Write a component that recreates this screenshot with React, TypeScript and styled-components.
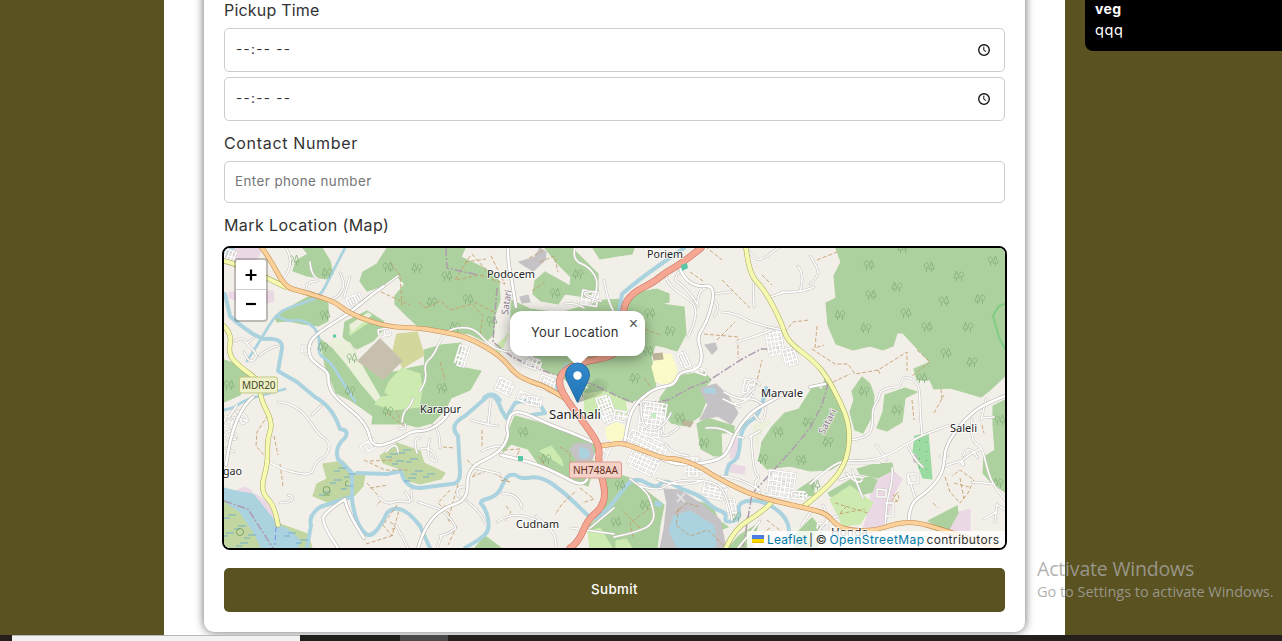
import React from 'react';
import styled, { createGlobalStyle } from 'styled-components';

const GlobalStyle = createGlobalStyle`
  * { box-sizing: border-box; }
  body {
    margin: 0;
    overflow: hidden;
    font-family: Inter, "Open Sans", sans-serif;
    color: #333;
  }
`;

const Screen = styled.div`
  position: relative;
  display: flex;
  flex-direction: column;
  width: 1282px;
  height: 641px;
  overflow: hidden;
  background: #5a5221;
`;

const Main = styled.main`
  display: flex;
  flex: 1;
  min-height: 0;
  overflow: hidden;
  padding-left: 164px;
`;

const Panel = styled.section`
  width: 901px;
  padding: 0 40px;
  background: #fff;
  overflow: hidden;
`;

const Card = styled.form`
  display: flex;
  flex-direction: column;
  height: 662px;
  margin-top: -30px;
  padding: 30px 20px 20px;
  border-radius: 10px;
  background: #fff;
  box-shadow: 0 0 10px rgba(0, 0, 0, 0.6);
`;

const Label = styled.label<{ $top: number; $bottom: number; $track: number }>`
  height: 22px;
  margin: ${(p) => p.$top}px 0 ${(p) => p.$bottom}px;
  font-size: 16px;
  line-height: 21px;
  letter-spacing: ${(p) => p.$track}px;
`;

const Field = styled.div<{ $height: number; $gap?: number }>`
  display: flex;
  flex-shrink: 0;
  align-items: center;
  justify-content: space-between;
  height: ${(p) => p.$height}px;
  margin-top: ${(p) => p.$gap ?? 0}px;
  padding: 0 14px 0 10px;
  border: 1px solid #ccc;
  border-radius: 5px;
`;

const TimeValue = styled.span`
  padding: 0 0 2px 1px;
  font-size: 13.4px;
  letter-spacing: 1.35px;
  white-space: pre;
`;

const Placeholder = styled.span`
  padding-bottom: 2px;
  font-size: 13.3px;
  letter-spacing: 0.47px;
  color: #757575;
`;

const MapFrame = styled.div`
  position: relative;
  flex-shrink: 0;
  height: 304px;
  margin: 0 -2px;
  border: 2px solid #000;
  border-radius: 8px;
  overflow: hidden;
  background: #f2efe9;
`;

const MapDrawing = styled.svg`
  display: block;
  width: 781px;
  height: 300px;
`;

const ZoomControl = styled.div`
  position: absolute;
  top: 10px;
  left: 10px;
  width: 34px;
  border: 2px solid rgba(0, 0, 0, 0.22);
  border-radius: 4px;
  background: #fff;
  background-clip: padding-box;
`;

const ZoomButton = styled.div`
  display: flex;
  align-items: center;
  justify-content: center;
  height: 29px;
  & + & { height: 31px; padding-bottom: 2px; border-top: 1px solid #ccc; }
`;

const Popup = styled.div`
  position: absolute;
  top: 63px;
  left: 286px;
  display: flex;
  align-items: center;
  width: 135px;
  height: 45px;
  padding: 0 0 3px 21px;
  border-radius: 12px;
  background: #fff;
  box-shadow: 0 3px 14px rgba(0, 0, 0, 0.4);
  font-size: 13px;
  letter-spacing: 0.23px;
  white-space: nowrap;
`;

const CloseMark = styled.span`
  position: absolute;
  top: 4px;
  right: 7px;
  font: 16px/18px "Liberation Sans", sans-serif;
  letter-spacing: 0;
  color: #555;
`;

const MarkerLayer = styled.svg`
  position: absolute;
  left: 335px;
  top: 107px;
`;

const Attribution = styled.div`
  position: absolute;
  right: 0;
  bottom: 0;
  display: flex;
  align-items: center;
  width: 258px;
  height: 17px;
  padding: 0 0 1px 5px;
  background: rgba(255, 255, 255, 0.8);
  font-size: 12px;
  white-space: pre;
`;

const Credit = styled.span<{ $track: number; $link?: boolean; $before?: number }>`
  margin-left: ${(p) => p.$before ?? 0}px;
  letter-spacing: ${(p) => p.$track}px;
  color: ${(p) => (p.$link ? '#0078a8' : '#333')};
`;

const Submit = styled.button`
  flex-shrink: 0;
  height: 44px;
  margin-top: 18px;
  padding: 0 0 2px;
  border: 0;
  border-radius: 5px;
  background: #5a5221;
  color: #fff;
  font: 500 13.3px Inter, sans-serif;
  letter-spacing: 0.4px;
`;

const Notice = styled.aside`
  width: 197px;
  height: 51px;
  margin-left: 20px;
  padding: 0 10px;
  border-radius: 0 0 0 8px;
  background: #000;
  color: #fff;
  font-size: 14.5px;
  line-height: 21px;
  letter-spacing: 0.6px;
`;

const NoticeTitle = styled.div`
  height: 19px;
  line-height: 18px;
  font-weight: 700;
  font-size: 14px;
  letter-spacing: 0.4px;
`;

const Watermark = styled.div`
  position: absolute;
  left: 1037px;
  top: 556px;
  color: rgba(165, 163, 158, 0.85);
  font-family: "Open Sans", sans-serif;
  white-space: nowrap;
`;

const WatermarkTitle = styled.div`
  font-size: 19.5px;
  line-height: 26px;
  letter-spacing: -0.18px;
`;

const WatermarkText = styled.div`
  font-size: 14.5px;
  line-height: 20px;
  letter-spacing: -0.03px;
`;

const Taskbar = styled.footer`
  display: flex;
  height: 6px;
  background: #26201d;
`;

const TaskSegment = styled.div<{ $width: number; $color: string; $edge?: string }>`
  width: ${(p) => p.$width}px;
  background: ${(p) => p.$color};
  border-top: 1px solid ${(p) => p.$edge ?? p.$color};
`;

const woods = [
  '296,261 308,254 303,248 322,248 330,261 333,274 327,279 307,276 293,271',
  '387,248 377,264 363,272 360,281 367,291 383,286 398,277 405,284 395,296 395,304 407,316 420,328 445,331 470,334 486,342 494,333 494,318 500,300 499,281 486,269 461,257 465,248',
  '545,248 572,248 598,274 598,291 585,297 565,294 558,304 541,301 533,294 535,281 545,272 570,286 571,277 558,264',
  '593,248 600,259 618,256 632,254 634,248',
  '511,300 530,309 560,313 604,300 622,299 622,320 511,330',
  '308,297 323,296 328,304 328,321 318,326 303,324 288,321 277,322 275,316 292,306',
  '345,322 367,311 383,321 385,327 373,341 357,349 343,337',
  '320,339 330,347 353,347 358,361 375,370 395,372 410,368 425,365 424,350 441,345 461,343 460,367 481,371 470,390 451,398 445,410 432,423 418,427 405,424 372,424 373,416 362,408 350,400 336,393 325,365',
  '224,360 240,365 252,378 240,395 224,402',
  '629,304 639,292 657,289 669,294 669,302 661,304 684,307 686,334 677,351 664,347 655,345 651,358 657,377 655,388 646,397 630,402 610,396 584,392 560,376 547,372 530,357 520,340 620,330',
  '676,376 704,372 711,380 700,392 708,396 700,416 685,426 671,423 662,410 660,398',
  '697,424 707,418 734,426 734,433 721,433 722,456 714,456 701,449',
  '836,248 841,262 834,276 836,298 826,303 828,325 836,344 853,350 870,346 883,350 893,346 897,333 903,333 915,346 930,362 914,369 917,380 930,380 934,389 950,388 981,397 990,390 1005,376 1005,248',
  '862,377 852,391 854,400 850,412 855,430 863,433 872,416 874,396 870,384',
  '885,395 905,388 917,392 905,398 902,422 887,431 877,428 883,412',
  '762,442 771,428 785,413 799,409 814,385 822,390 826,375 836,396 848,426 847,459 830,470 810,471 790,466 767,469 759,460',
  '828,493 850,480 870,477 877,480 872,492 850,498 840,500 830,496',
  '857,469 874,464 892,463 893,470 878,478 860,474',
  '928,521 957,506 958,513 948,531',
  '993,406 1005,400 1005,492 992,483 983,473 984,457 995,450 993,425',
  '603,470 630,478 645,490 664,505 660,525 657,548 590,548 589,526 604,512',
  '515,416 551,426 578,436 598,446 595,463 588,486 565,478 538,463 528,449 511,444 503,452 505,439',
  '475,548 485,536 501,548',
  '690,500 712,505 718,520 728,527 720,530 700,510',
  '795,492 814,479 814,495 802,497',
  '728,548 740,535 758,524 752,548',
  '795,535 812,518 822,530 818,548 795,548',
];

const meadows = [
  '389,382 402,368 420,374 422,390 394,398 385,392',
  '382,397 422,390 419,407 393,410 375,404',
  '540,451 551,446 561,459 563,466',
  '830,499 850,486 873,503 860,524 843,526',
  '584,394 607,391 625,402 628,415 604,410 585,417',
  '588,532 600,528 612,548 590,548',
  '616,541 626,539 632,548 616,548',
  '350,325 365,318 372,320 350,335',
  '495,347 505,338 508,334 503,347 498,356',
];

const wetlands = [
  '323,464 343,461 353,473 365,474 363,486 352,498 330,503 313,496 317,484 327,479',
  '380,456 397,443 420,451 424,463 445,473 441,479 420,484 405,480 400,469 383,463',
  '224,501 240,512 256,536 260,548 224,548',
  '280,524 308,534 312,548 297,548',
];

const residential = [
  '255,494 273,506 280,523 272,519 254,500',
  '235,491 245,487 252,491 250,496 237,494',
  '872,483 893,471 902,479 893,496 885,528 863,530 870,505',
  '953,514 970,509 970,531 947,531',
  '733,439 739,439 739,459 730,458',
  '727,463 745,467 744,474 730,472',
  '226,248 262,248 257,259 240,262',
  '229,292 273,291 274,301 260,305 229,298',
];

const rivers = [
  'M225 294L230 316Q238 324 253 334L263 339Q283 337 282 348L278 371L297 382L315 397Q333 407 340 429Q350 430 345 438Q334 447 338 459L352 473V499Q355 525 366 534Q374 540 387 513Q400 500 420 526L430 548',
  'M357 473L387 474L401 471Q405 488 420 488L451 484Q461 484 460 470L458 436Q448 425 465 416L488 396Q495 392 501 409L506 418L515 403Q530 398 541 406L545 413L532 415',
  'M350 497L320 507Q308 516 311 525L307 548',
  'M465 548L481 539L490 529L486 509L478 501L498 496L506 476L515 474L521 479L541 476L565 493L585 513L591 518',
  'M596 518L605 513L618 496L634 476L657 489L664 479L681 489L701 496L714 509L727 513L724 523L741 519L737 503L757 499L781 511L791 529L788 539',
  'M766 388L761 415L741 426L739 459L727 464L726 476',
  'M684 248L661 264Q638 280 622 294L619 311',
  'M484 398Q492 390 500 400',
];

const streams = [
  'M345 248L330 277L320 297L300 304L277 312L260 341L247 361',
  'M277 316L287 322L300 319L315 327L320 340L318 355L330 361L340 378L349 392L355 401',
  'M224 410L235 408L242 401L270 393L285 389',
  'M558 394L553 379L567 364',
];

const majorLanes = [
  'M384 286L372 294L350 313L325 328L309 341L309 357L318 365L329 373L328 383L334 397L367 423L372 449L400 439L412 431L428 431L445 420L452 408',
  'M226 465L230 436L244 404L253 397',
  'M418 548L424 528L442 508L468 500L467 468L498 454L509 437L506 425L514 408L550 425L575 434L597 444',
  'M508 248L508 262L512 281L516 307',
  'M679 265L683 278L698 287L711 285L714 296L708 318L703 328L697 338L703 356L698 370L679 372L675 385L655 388L642 398L636 404L629 416L625 440',
  'M662 459L676 466L712 462L727 455L736 431L752 411L775 399L785 393',
  'M1005 396L984 404L966 418L945 445L944 471L930 490L909 504L909 520',
  'M810 387L825 384',
  'M345 499L328 510L320 522L338 548M345 500L348 514L364 538',
  'M501 455L531 462L555 472L585 488L588 477',
];

const lanes = [
  'M340 273L350 291L331 300M350 277L344 297M310 262L311 274L321 281L307 282L306 291L314 294M286 248L292 258L287 276L280 282M384 286L398 276',
  'M235 341L242 337L247 344L259 356L249 364L244 352M259 356L270 347L278 346M247 343L254 338',
  'M278 402L286 402L304 412L318 434L331 443L326 457L316 461L312 475L295 473L279 468L268 461M312 415L321 406M280 503L292 502L293 496L288 495',
  'M224 436L231 425L237 437M228 418L237 405M226 448L234 452M232 417L248 421M236 412L248 415L246 423L240 424L238 410M227 440L236 439',
  'M402 422L403 412L410 407L413 399M399 428L408 431L405 424M420 438L412 438L417 453M379 497L385 505L400 500L414 504L405 492M386 452L397 439L398 452M411 490L412 501M396 525L408 548',
  'M420 391L427 381L424 364L434 355L440 340L450 329L466 327L477 331L490 346L508 353L525 350L535 360',
  'M421 449L430 446L439 464L425 455L430 439M433 425L440 430L440 448',
  'M471 420L487 425L498 426M488 425L491 399M475 468L500 474M482 451L490 446L505 446M502 494L518 492L522 508M497 522L509 514L532 517L557 532L556 548M536 516L545 527L556 524M571 528L614 534M590 528L614 508',
  'M441 510L418 502M468 502L480 511L486 524M442 510L458 526L452 532L440 536M442 535L437 548M466 487L457 486L457 498L466 500',
  'M575 248L572 260L590 267L600 285L592 303M597 292L583 291L587 298L601 301M604 280L608 303L614 312M565 304L575 302L584 308',
  'M668 272L665 278L672 288L685 296L697 307L694 325L688 337M680 271L672 279L686 287L698 305M707 287L696 291L698 306M716 294L725 292L731 292M713 301L722 305L714 316M722 312L735 313L756 325L783 330M737 342L760 335L772 330',
  'M746 248L755 260L763 259L771 253L780 247M781 292L802 293L814 287M798 266L805 276L800 291M770 297L785 292M753 274L754 307',
  'M641 398L640 429L662 431L671 413M661 430L661 443L679 427',
  'M640 486L658 492L674 480L710 480L727 492L732 520M630 479L646 490L652 504L655 520L643 531L614 537M665 444L672 454L688 456M657 479L680 489L704 480',
  'M706 428L720 427L736 437L744 438M752 411L757 420L764 423L766 407M751 435L753 472L761 478L752 483L763 499M749 437L760 431M721 476L739 477L760 490',
  'M724 392L738 400L754 398L762 404M735 403L744 405L752 394M745 390L751 373L760 385M742 400L755 387M723 399L740 407',
  'M810 256L820 270L815 280L810 284M810 484L826 470L843 460L861 461L883 458L907 444L922 435L950 425M887 460L876 445M907 444L914 460L923 467M850 440L868 438L873 425L872 409L879 399L880 391L891 387L900 387L903 376L915 380L920 390L920 413L922 435',
  'M892 468L893 480L886 503L885 529M908 475L916 501M840 480L854 474L863 478M846 473L858 486L862 480M840 463L880 463',
  'M877 489L886 490V497H877ZM886 503H893V516H886M908 474H918V483H908Z',
  'M972 419L970 440L982 447L986 464L992 484L1005 500M972 482L994 484M945 466L963 459L964 467L959 460L980 449M963 456L968 442L978 458M940 456L948 456M997 504L995 522M996 512L984 519M998 505L1005 510M982 418L994 417M981 420L986 399',
  'M825 548L830 515L823 505M815 538L824 519L838 516M765 536L778 548M801 526L812 510M852 470L858 487L863 498M738 548L748 536L760 521',
];

const primary = [
  'M262 248L270 259L285 287L300 291L317 296L335 302L350 314L387 327L420 328L443 332L468 337L501 356L515 374L531 382L545 386L564 398',
  'M600 446L614 444L624 443L664 459L676 458L699 466L714 476L747 493L774 501L810 509L827 514L837 526L853 531L877 530L897 523L917 522L943 530L975 540L998 548',
];
const secondary = [
  'M224 326L232 334L228 354L240 367L260 381L260 398L273 423L267 440L268 463L260 491L275 506L278 525',
  'M224 261L240 264L285 287',
  'M746 248L749 274L764 289L781 321L787 341L814 361L827 377L840 401L850 426L848 459L830 486L803 507',
  'M771 503L761 513L734 529L726 548',
];
const trunk = [
  'M701 248L681 264L666 272L654 282L634 292L624 304L623 325L623 345L611 357L585 361L563 370L558 384L568 402L585 424L600 446L598 463L606 493L601 509L588 519L578 543L570 548',
];

const tracks = [
  'M268 415L257 432L256 446L266 457M274 436L278 455M280 464L283 486M425 308L441 301L450 310L472 304L483 316L480 335M426 308L418 302',
  'M391 263L400 275L402 306M381 292L410 305M440 362L445 380M387 413L404 426L396 410',
  'M470 256L455 280L480 275L505 284L490 254M472 254L492 277M465 262L486 259M474 302L494 312M540 262L554 256L558 272M529 258L544 250M545 282L532 291',
  'M367 483L382 500L376 505M370 488L388 485M397 505L383 525L392 536L399 510M366 544L394 535M364 460L385 470L408 470M370 461L394 460M390 522L398 527L390 530',
  'M443 447L455 448M482 430L482 447M467 460L478 470L472 477L488 470L510 482L500 480M450 490L438 503L449 513M458 484L448 520L457 526L448 545M432 520L445 505M506 506L511 512L505 521M575 492L562 504L555 515M580 488L594 499L582 503M515 460L520 449L505 450',
  'M560 447L570 453V483M548 469L538 456',
  'M696 255L706 247L722 260M690 272L703 281M722 280L750 308M704 334L738 337L738 358M717 340L735 322M660 335L645 329L635 332M644 378L652 389M762 275L772 285',
  'M756 385L762 360M785 332L793 322L809 320M817 326L815 348L824 345M812 349L835 364L848 364L855 374L878 370L907 352V371M833 382L850 374M878 370L880 374M917 350L930 362L912 376M941 389L942 399M817 260L837 252',
  'M912 400L914 420M934 413L944 395M897 493L890 504L899 500L898 492M893 494L897 502M945 477L950 492L960 503L968 493L974 480L960 470L952 476M954 483L969 487M960 478L964 499M933 503L938 508M982 425L984 433',
  'M650 508L630 523L633 537M640 528L622 510M679 508L676 525L690 536L708 530L726 548M675 513L687 503L700 507M767 520L782 532M770 528L756 538M847 506L839 514L865 509M835 503L868 513M748 516L740 531',
];

const boundaries = [
  'M446 248L447 268L478 275M497 288L494 325L493 342L511 356L530 366L550 373L592 384L617 396L640 405L668 400L690 388L708 381L742 359L761 349H785L806 354L824 370L829 380L822 405L810 428L792 450L769 475L752 494L743 548',
  'M224 501L248 509L273 548',
];

type Village = [number, number, number, number, number, number, number];
// x, y, width, height, angle, columns, rows
const villages: Village[] = [
  [642, 401, 25, 34, 8, 7, 9], [632, 429, 40, 15, 25, 9, 4], [634, 448, 29, 18, 25, 8, 5],
  [685, 458, 16, 18, 0, 5, 5], [705, 482, 23, 14, 12, 5, 5], [770, 470, 26, 25, 8, 7, 6],
  [792, 491, 15, 7, 5, 5, 3], [765, 330, 15, 26, -10, 5, 7], [782, 350, 12, 17, -15, 4, 5],
  [542, 375, 15, 13, 20, 5, 4], [500, 377, 16, 13, 25, 5, 4], [525, 355, 18, 10, 20, 5, 3],
  [520, 391, 22, 9, 20, 5, 3], [596, 399, 13, 27, -20, 5, 8], [615, 410, 14, 10, 10, 4, 3],
  [346, 299, 14, 9, -25, 6, 1], [460, 345, 10, 20, 17, 4, 5], [583, 290, 16, 14, 10, 4, 4],
  [227, 249, 10, 12, 20, 4, 3], [378, 330, 12, 7, -10, 3, 2], [302, 346, 7, 8, 0, 2, 2],
  [745, 379, 10, 18, 10, 3, 5], [677, 355, 8, 15, -25, 4, 2], [360, 446, 15, 9, -30, 4, 2],
  [694, 366, 14, 5, 20, 4, 2], [528, 396, 14, 8, 10, 4, 3], [726, 500, 8, 14, -10, 3, 4],
  [601, 443, 11, 18, 25, 3, 4], [818, 523, 8, 7, 10, 2, 2], [226, 416, 8, 9, 20, 2, 3],
];

const treeSpots = [
  [869, 265], [903, 248], [929, 267], [959, 276], [993, 261], [897, 287], [871, 295], [840, 315], [906, 313],
  [866, 328], [944, 301], [980, 299], [927, 327], [968, 327], [946, 353], [972, 362], [922, 378], [864, 391],
  [294, 260], [327, 273], [325, 315], [323, 347], [352, 358], [350, 391], [388, 267], [417, 268], [447, 276], [432, 302],
  [468, 299], [455, 327], [492, 321], [578, 274], [555, 293], [580, 392], [650, 313], [670, 331], [648, 351], [635, 378],
  [442, 388], [388, 411], [523, 432], [546, 459], [680, 418], [704, 443], [778, 432], [763, 459], [801, 460], [828, 442],
  [815, 485], [897, 410], [1000, 420], [998, 483], [620, 485], [645, 505], [616, 522], [736, 517], [229, 385], [808, 422],
];

const waterDashes = [
  [338, 468], [348, 474], [323, 492], [345, 486], [334, 480], [390, 454], [403, 450], [410, 459], [396, 461],
  [415, 471], [427, 474], [408, 478], [228, 515], [238, 526], [226, 533], [248, 535], [240, 543], [288, 533], [300, 540],
];

const places = [
  { name: 'Podocem', x: 487, y: 278, w: 48, size: 11.5 },
  { name: 'Poriem', x: 647, y: 258, w: 36, size: 11.5 },
  { name: 'Marvale', x: 761, y: 397, w: 42, size: 11.5 },
  { name: 'Saleli', x: 950, y: 432, w: 27, size: 11.5 },
  { name: 'Karapur', x: 420, y: 413, w: 41, size: 11.5 },
  { name: 'Sankhali', x: 549, y: 419, w: 52, size: 13 },
  { name: 'Cudnam', x: 516, y: 528, w: 43, size: 11.5 },
  { name: 'Honda', x: 831, y: 536, w: 37, size: 11.5 },
  { name: 'gao', x: 223, y: 475, w: 19, size: 11.5 },
];

const Polys = ({ items, fill }: { items: string[]; fill: string }) => (
  <g fill={fill} stroke={fill} strokeWidth="1.2" strokeLinejoin="round">
    {items.map((points) => <polygon key={points} points={points} />)}
  </g>
);

const Lines = ({ items, color, width, dash }: { items: string[]; color: string; width: number; dash?: string }) => (
  <g fill="none" stroke={color} strokeWidth={width} strokeDasharray={dash} strokeLinejoin="round" strokeLinecap={dash ? 'butt' : 'round'}>
    {items.map((d) => <path key={d} d={d} />)}
  </g>
);

// Rounds the bends of a polyline by curving between segment midpoints.
const smooth = (d: string) => {
  if (/[QHVZ]/.test(d)) return d;
  return d
    .split('M')
    .filter(Boolean)
    .map((part) => {
      const pts = part.split('L').map((p) => p.trim().split(' ').map(Number));
      if (pts.length < 3) return `M${part}`;
      let out = `M${pts[0].join(' ')}`;
      for (let i = 1; i < pts.length - 1; i++) {
        const last = i === pts.length - 2;
        const ex = last ? pts[i + 1][0] : (pts[i][0] + pts[i + 1][0]) / 2;
        const ey = last ? pts[i + 1][1] : (pts[i][1] + pts[i + 1][1]) / 2;
        out += `Q${pts[i].join(' ')} ${ex} ${ey}`;
      }
      return out;
    })
    .join('');
};

const Road = ({ items, casing, fill, width }: { items: string[]; casing: string; fill: string; width: number }) => {
  const curved = items.map(smooth);
  return (
    <>
      <Lines items={curved} color={casing} width={width + 1.1} />
      <Lines items={curved} color={fill} width={width} />
    </>
  );
};

const gridPath = ([, , w, h, , cols, rows]: Village) => {
  let d = '';
  for (let i = 0; i < cols; i++) {
    const x = (i * w) / Math.max(cols - 1, 1);
    d += `M${x.toFixed(1)} ${i % 3 === 1 ? 2 : 0}V${i % 2 ? h : h - 2}`;
  }
  for (let j = 0; j < rows; j++) {
    const y = (j * h) / Math.max(rows - 1, 1);
    d += `M${j % 3 === 1 ? 3 : 0} ${y.toFixed(1)}H${j % 2 ? w : w - 2}`;
  }
  return d;
};

const VillageStreets = () => (
  <g fill="none" strokeLinecap="round">
    {villages.map((v) => (
      <g key={`${v[0]}-${v[1]}`} transform={`translate(${v[0]} ${v[1]}) rotate(${v[4]})`}>
        <path d={gridPath(v)} stroke="#c9c5c0" strokeWidth="2.3" />
        <path d={gridPath(v)} stroke="#fff" strokeWidth="1.6" />
      </g>
    ))}
  </g>
);

const Terrain = () => (
  <MapDrawing viewBox="224 248 781 300">
    <rect x="224" y="248" width="781" height="300" fill="#f2efe9" />
    <Polys items={residential} fill="#ead9e5" />
    <Polys items={woods} fill="#add19e" />
    <Polys items={meadows} fill="#cdebb0" />
    <Polys items={['350,325 368,313 371,315 352,331', '329,343 335,338 350,343 366,373 380,397 376,401 360,382 345,362', '571,378 588,388 571,384', '753,425 771,420 759,436 757,448']} fill="#eaf0da" />
    <Polys items={['397,334 417,332 424,355 403,368 393,350']} fill="#d3d79c" />
    <Polys items={['358,361 380,339 402,361 383,379']} fill="#c7c0ae" />
    <Polys items={['657,354 671,354 677,371 676,381 667,384 656,382 652,367', '606,428 616,422 624,426 626,436 615,442 607,438']} fill="#fbfac9" />
    <Polys items={['653,354 662,353 663,359 654,360', '683,420 693,422 690,427 682,424']} fill="#bdb59a" />
    <Polys items={['664,489 680,490 704,506 720,520 726,548 660,548 664,530 667,503', '700,388 716,384 728,396 738,413 731,424 718,416 700,420 708,405', '570,449 576,443 591,444 595,459 578,463', '519,262 535,257 540,248 546,252 545,260 533,271 525,266', '520,297 528,295 530,302 522,303', '705,345 715,343 717,349 712,354', '913,455 918,454 918,463 914,462']} fill="#c5c2c5" />
    <Polys items={['915,436 928,433 932,479 923,478 918,465 918,455 913,452']} fill="#9bdba1" />
    <Polys items={wetlands} fill="#c1d6a0" />
    <Polys items={['224,488 240,492 253,494 277,524 287,529 300,540 298,548 261,548 256,536 240,512 224,501', '674,516 690,511 714,526 716,548 677,548 669,530', '580,447 588,450 589,457 580,458', '704,389 714,388 716,393 706,393', '656,501 662,503 660,507 655,505', '224,248 234,248 230,252 224,258']} fill="#aad3df" />
    <Lines items={rivers.map(smooth)} color="#aad3df" width={4} />
    <Lines items={streams.map(smooth)} color="#aad3df" width={2.8} />
    <path d="M1005 304L999 306L993 316L999 337L1005 349" fill="none" stroke="#82cc85" strokeWidth="2.2" />
    <g stroke="#62a6d0" strokeWidth=".8">
      {waterDashes.map(([x, y]) => <path key={`${x}-${y}`} d={`M${x} ${y}h8m-12 3h6`} />)}
    </g>
    <g fill="none" stroke="#84ad7b" strokeWidth=".8">
      {treeSpots.map(([x, y], i) => (
        <path key={`${x}-${y}`} transform={i % 2 ? `translate(${x} ${y}) scale(-1 1)` : `translate(${x} ${y})`} d="M-2.500 5V1M-2.500 1C-6 1-5-4-2.500-4S0 1-2.500 1M2.500 5V2M2.500-5L0 2H5Z" />
      ))}
    </g>
    <g fill="none" stroke="#7ea665" strokeWidth="1"><circle cx="326.500" cy="490" r="3.500" /><path d="M324 495h6M346 486q-2-5 2-5" /><circle cx="240" cy="532" r="3.500" /></g>
    <Lines items={tracks} color="#c49c6a" width={0.85} dash="4 2" />
    <Lines items={boundaries} color="#ae9cae" width={1.5} dash="8 2 2 2" />
    <VillageStreets />
    <Road items={lanes} casing="#c6c1bb" fill="#fff" width={1.5} />
    <Road items={majorLanes} casing="#b5b0aa" fill="#fff" width={2.6} />
    <Road items={secondary} casing="#a9ab61" fill="#f6f9b0" width={4.1} />
    <Road items={primary} casing="#c58b4e" fill="#fbd09a" width={3.9} />
    <Road items={trunk} casing="#c77561" fill="#f6a793" width={5.8} />
    <path d="M276 527l-1 18" fill="none" stroke="#7c8ceb" strokeDasharray="5 3" />
    <g fill="#57c7a5"><path d="M681 265l6-2 1 5-6 3zM518 456h5v5h-5z" /><circle cx="334.500" cy="336" r="1.700" /></g>
    <path d="M651 413h5v5h-5z" fill="#c5ecc4" />
    <g fill="#64a66c">{[440, 449, 458, 467].map((y) => <path key={y} d={`M919 ${y}h1v1h-1zm7 2h1v1h-1z`} />)}</g>
    <path d="M677 494l8 8m-8 0l8-9" stroke="#e1dfdf" strokeWidth="2" />
    <g fontFamily="Noto Sans, sans-serif">
      <rect x="239.500" y="377" width="38" height="16" rx="2" fill="#eef0c8" stroke="#c5c786" />
      <text x="242" y="389" fontSize="10" textLength="33.500" fill="#444925">MDR20</text>
      <rect x="569.500" y="462" width="52" height="16" rx="2" fill="#f4d2c8" stroke="#d99b8d" />
      <text x="573" y="474" fontSize="10" textLength="45" fill="#672d20">NH748AA</text>
      <g fill="#89798d" stroke="#f5f2ee" strokeWidth="1.5" paintOrder="stroke" fontSize="9.500">
        <text transform="translate(508 315) rotate(-82)" textLength="25">Satari</text>
        <text transform="translate(824 435) rotate(-62)" textLength="27">Satari</text>
      </g>
      <g fill="#222" stroke="#fff" strokeOpacity=".75" strokeWidth="2" paintOrder="stroke" strokeLinejoin="round">
        {places.map((p) => <text key={p.name} x={p.x} y={p.y} fontSize={p.size} textLength={p.w} lengthAdjust="spacingAndGlyphs">{p.name}</text>)}
      </g>
    </g>
  </MapDrawing>
);

const Marker = () => (
  <MarkerLayer width="60" height="52" viewBox="559 355 60 52">
    <defs>
      <linearGradient id="pinFill" x1="0" y1="0" x2="0" y2="1"><stop stopColor="#3289cb" /><stop offset="1" stopColor="#2073b6" /></linearGradient>
      <linearGradient id="pinShade" x1="0" y1="1" x2="1" y2="0"><stop stopColor="#000" stopOpacity=".3" /><stop offset="1" stopColor="#000" stopOpacity="0" /></linearGradient>
    </defs>
    <path d="M577 403L590 384Q601 372 608 382Q609 391 594 397Z" fill="url(#pinShade)" />
    <path d="M566 355H589L579 365Q577.500 366 576 365Z" fill="#fff" />
    <path d="M577.500 402.500L568.500 384Q565.500 379 565.500 375A12 12 0 0 1 589.500 375Q589.500 379 586.500 384Z" fill="url(#pinFill)" stroke="#2b6f9f" />
    <circle cx="577.500" cy="375.500" r="4.200" fill="#fff" />
  </MarkerLayer>
);

const ClockIcon = () => (
  <svg width="13" height="14" viewBox="0 0 13 14" fill="none" stroke="#111">
    <circle cx="7" cy="7" r="5.300" strokeWidth="1.350" />
    <path d="M6.800 3.700V7.200L9.100 8.600" strokeWidth="1" />
  </svg>
);

const Flag = () => (
  <svg width="12" height="8" viewBox="0 0 12 8"><path fill="#4c7be1" d="M0 0h12v4H0z" /><path fill="#ffd500" d="M0 4h12v3H0z" /><path fill="#e0bc00" d="M0 7h12v1H0z" /></svg>
);

const ZoomGlyph = ({ d }: { d: string }) => (
  <svg width="12" height="12" viewBox="0 0 12 12" fill="none" stroke="#000" strokeWidth="2.200"><path d={d} /></svg>
);

const TimeField = ({ gap }: { gap?: number }) => (
  <Field $height={44} $gap={gap}>
    <TimeValue>--:-- --</TimeValue>
    <ClockIcon />
  </Field>
);

export default function App() {
  return (
    <Screen>
      <GlobalStyle />
      <Main>
        <Panel>
          <Card>
            <Label $top={0} $bottom={6} $track={0.2}>Pickup Time</Label>
            <TimeField />
            <TimeField gap={5} />
            <Label $top={12} $bottom={6} $track={0.67}>Contact Number</Label>
            <Field $height={42}><Placeholder>Enter phone number</Placeholder></Field>
            <Label $top={12} $bottom={9} $track={0.42}>Mark Location (Map)</Label>
            <MapFrame>
              <Terrain />
              <ZoomControl>
                <ZoomButton><ZoomGlyph d="M.5 6H11.500M6 .5V11.500" /></ZoomButton>
                <ZoomButton><ZoomGlyph d="M1 6H11" /></ZoomButton>
              </ZoomControl>
              <Popup>Your Location<CloseMark>×</CloseMark></Popup>
              <Marker />
              <Attribution>
                <Flag />
                <Credit $link $track={0.15} $before={3}>Leaflet</Credit>
                <Credit $track={-0.3} $before={2}>| © </Credit>
                <Credit $link $track={0.43}>OpenStreetMap</Credit>
                <Credit $track={0.33} $before={2}>contributors</Credit>
              </Attribution>
            </MapFrame>
            <Submit type="button">Submit</Submit>
          </Card>
        </Panel>
        <Notice>
          <NoticeTitle>veg</NoticeTitle>
          qqq
        </Notice>
      </Main>
      <Taskbar>
        <TaskSegment $width={12} $color="#26201d" />
        <TaskSegment $width={288} $color="#f2f2f2" $edge="#b9b8b4" />
        <TaskSegment $width={100} $color="#1f1f1b" />
        <TaskSegment $width={48} $color="#4b4948" />
      </Taskbar>
      <Watermark>
        <WatermarkTitle>Activate Windows</WatermarkTitle>
        <WatermarkText>Go to Settings to activate Windows.</WatermarkText>
      </Watermark>
    </Screen>
  );
}
